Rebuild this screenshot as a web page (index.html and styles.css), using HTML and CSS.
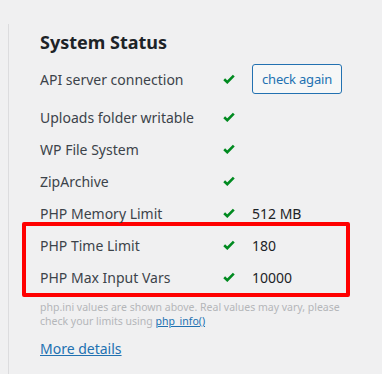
FILE: index.html
```html
<!DOCTYPE html>
<html>
<head>
<meta charset="utf-8">
<link rel="stylesheet" href="styles.css">
</head>
<body>
<div class="panel">
  <h2 class="title">System Status</h2>
  <div class="row row-first">
    <span class="label">API server connection</span>
    <span class="check"><svg viewBox="0 0 12 10" width="12" height="10"><path d="M1.2 5.2 L4.3 8.2 L10.8 1.6" fill="none" stroke="#008a20" stroke-width="2.6"/></svg></span>
    <span class="value"><button class="btn">check again</button></span>
  </div>
  <div class="row">
    <span class="label">Uploads folder writable</span>
    <span class="check"><svg viewBox="0 0 12 10" width="12" height="10"><path d="M1.2 5.2 L4.3 8.2 L10.8 1.6" fill="none" stroke="#008a20" stroke-width="2.6"/></svg></span>
    <span class="value"></span>
  </div>
  <div class="row">
    <span class="label">WP File System</span>
    <span class="check"><svg viewBox="0 0 12 10" width="12" height="10"><path d="M1.2 5.2 L4.3 8.2 L10.8 1.6" fill="none" stroke="#008a20" stroke-width="2.6"/></svg></span>
    <span class="value"></span>
  </div>
  <div class="row">
    <span class="label">ZipArchive</span>
    <span class="check"><svg viewBox="0 0 12 10" width="12" height="10"><path d="M1.2 5.2 L4.3 8.2 L10.8 1.6" fill="none" stroke="#008a20" stroke-width="2.6"/></svg></span>
    <span class="value"></span>
  </div>
  <div class="row">
    <span class="label">PHP Memory Limit</span>
    <span class="check"><svg viewBox="0 0 12 10" width="12" height="10"><path d="M1.2 5.2 L4.3 8.2 L10.8 1.6" fill="none" stroke="#008a20" stroke-width="2.6"/></svg></span>
    <span class="value">512 MB</span>
  </div>
  <div class="highlight">
    <div class="row">
      <span class="label">PHP Time Limit</span>
      <span class="check"><svg viewBox="0 0 12 10" width="12" height="10"><path d="M1.2 5.2 L4.3 8.2 L10.8 1.6" fill="none" stroke="#008a20" stroke-width="2.6"/></svg></span>
      <span class="value">180</span>
    </div>
    <div class="row">
      <span class="label">PHP Max Input Vars</span>
      <span class="check"><svg viewBox="0 0 12 10" width="12" height="10"><path d="M1.2 5.2 L4.3 8.2 L10.8 1.6" fill="none" stroke="#008a20" stroke-width="2.6"/></svg></span>
      <span class="value">10000</span>
    </div>
  </div>
  <p class="note">php.ini values are shown above. Real values may vary, please check your limits using <a href="#" class="note-link">php_info()</a></p>
  <a href="#" class="more">More details</a>
</div>
</body>
</html>
```
FILE: styles.css
```css
html, body {
  margin: 0;
  padding: 0;
  background: #f0f0f1;
  height: 100%;
  overflow: hidden;
}
body {
  font-family: "Noto Sans", "Open Sans", sans-serif;
  color: #3c434a;
}
.panel {
  margin: 24px 0 0 8px;
  border-left: 1px solid #dcdcde;
  padding: 0 0 0 31px;
  height: 350px;
  box-sizing: border-box;
}
.title {
  margin: 0;
  padding-top: 6px;
  font-size: 18px;
  line-height: 24px;
  font-weight: 700;
  color: #1d2327;
  height: 24px;
}
.row {
  display: flex;
  align-items: center;
  height: 32px;
  font-size: 14px;
}
.row-first {
  height: 38px;
  margin-top: 6px;
  margin-bottom: 3px;
}
.label {
  width: 183px;
  flex: none;
  white-space: nowrap;
}
.check {
  width: 29px;
  flex: none;
  display: flex;
  align-items: center;
}
.check svg {
  display: block;
}
.value {
  color: #1d2327;
}
.btn {
  display: block;
  font-family: inherit;
  font-size: 13px;
  letter-spacing: -0.2px;
  color: #2271b1;
  background: #f6f7f7;
  border: 1px solid #2271b1;
  border-radius: 3px;
  height: 30px;
  width: 90px;
  padding: 0;
  line-height: 28px;
  cursor: pointer;
}
.highlight {
  margin-top: -7px;
  margin-left: -18px;
  width: 328px;
  box-sizing: border-box;
  border: 4px solid #ff0000;
  border-radius: 2px;
  padding: 3px 0 0 14px;
}
.note {
  margin: 3px 0 0;
  font-size: 10.5px;
  line-height: 14px;
  color: #b4b6b9;
  width: 310px;
}
.note-link {
  color: #2271b1;
  text-decoration: underline;
}
.more {
  display: inline-block;
  margin-top: 11px;
  font-size: 14px;
  line-height: 20px;
  color: #2271b1;
  text-decoration: underline;
}
```
